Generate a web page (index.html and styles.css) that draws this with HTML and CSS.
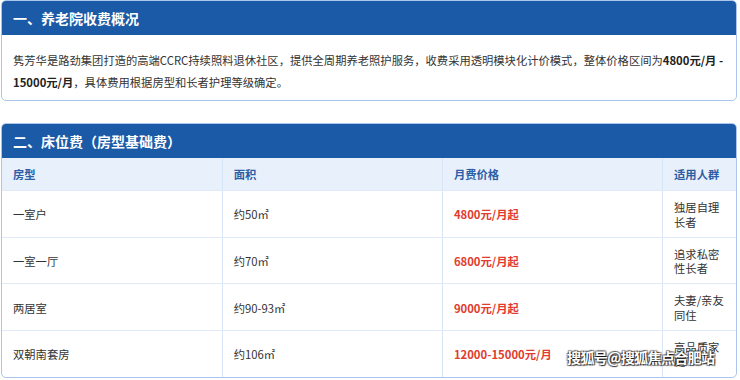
FILE: index.html
```html
<!DOCTYPE html>
<html lang="zh-CN">
<head>
<meta charset="utf-8">
<link rel="stylesheet" href="styles.css">
</head>
<body>
<div class="page">
  <section class="card">
    <h2 class="card-title">一、养老院收费概况</h2>
    <p class="intro">隽芳华是路劲集团打造的高端CCRC持续照料退休社区，提供全周期养老照护服务，收费采用透明模块化计价模式，整体价格区间为<b>4800元/月 -</b> <b>15000元/月</b>，具体费用根据房型和长者护理等级确定。</p>
  </section>
  <section class="card">
    <h2 class="card-title">二、床位费（房型基础费）</h2>
    <table class="fees">
      <colgroup><col class="c1"><col class="c2"><col class="c3"><col class="c4"></colgroup>
      <thead>
        <tr><th>房型</th><th>面积</th><th>月费价格</th><th>适用人群</th></tr>
      </thead>
      <tbody>
        <tr><td>一室户</td><td>约50㎡</td><td class="price">4800元/月起</td><td>独居自理长者</td></tr>
        <tr><td>一室一厅</td><td>约70㎡</td><td class="price">6800元/月起</td><td>追求私密性长者</td></tr>
        <tr><td>两居室</td><td>约90-93㎡</td><td class="price">9000元/月起</td><td>夫妻/亲友同住</td></tr>
        <tr><td>双朝南套房</td><td>约106㎡</td><td class="price">12000-15000元/月</td><td>高品质家庭</td></tr>
      </tbody>
    </table>
  </section>
  <div class="watermark">搜狐号@搜狐焦点合肥站</div>
</div>
</body>
</html>
```
FILE: styles.css
```css
html, body {
  margin: 0;
  padding: 0;
  background: #ffffff;
}
body {
  font-family: "Noto Sans CJK SC", "Noto Sans", sans-serif;
  color: #333333;
  font-size: 11.3px;
}
.page {
  position: relative;
  width: 736px;
  margin-left: 1px;
  display: flex;
  flex-direction: column;
  gap: 22px;
  height: 378px;
  overflow: hidden;
}
.card {
  border: 1px solid #aac6ea;
  border-radius: 5px;
  overflow: hidden;
  background: #fff;
  flex: none;
}
.card-title {
  margin: 0;
  height: 34px;
  line-height: 34px;
  background: #1a5aa6;
  color: #ffffff;
  font-size: 14px;
  font-weight: 700;
  padding: 0 11px;
}
.intro {
  margin: 0;
  padding: 14px 11px 7px;
  line-height: 22px;
  font-size: 11.3px;
  color: #333;
}
.intro b {
  font-weight: 700;
  color: #222;
}
.fees {
  width: 100%;
  border-collapse: collapse;
  table-layout: fixed;
}
.c1, .c2, .c3 { width: 30%; }
.c4 { width: 10%; }
.fees th, .fees td {
  text-align: left;
  padding: 9px 10px 8px 11px;
  line-height: 14.3px;
  font-size: 11.3px;
  border-left: 1px solid #d8e5f6;
  border-bottom: 1px solid #dfe9f7;
}
.fees th:first-child, .fees td:first-child {
  border-left: none;
}
.fees th {
  background: #e8f0fb;
  color: #2b5ea6;
  font-weight: 700;
  padding-top: 9px;
  padding-bottom: 9px;
}
.fees td {
  color: #333;
}
.fees td.price {
  color: #e23b2f;
  font-weight: 700;
}
.fees tbody tr:last-child td {
  border-bottom: none;
}
.watermark {
  position: absolute;
  left: 566px;
  top: 347px;
  font-size: 14px;
  letter-spacing: -0.6px;
  font-weight: 700;
  color: #ffffff;
  text-shadow: 1px 1px 1px rgba(0,0,0,0.75), -1px -1px 1px rgba(0,0,0,0.45), 1px -1px 1px rgba(0,0,0,0.45), -1px 1px 1px rgba(0,0,0,0.45);
}
```
